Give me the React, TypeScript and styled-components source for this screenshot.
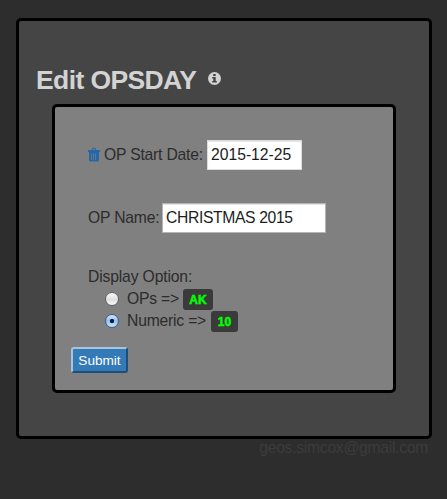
import React from "react";
import styled, { createGlobalStyle } from "styled-components";

const GlobalStyle = createGlobalStyle`
  *, *::before, *::after { box-sizing: border-box; }
  html, body { margin: 0; padding: 0; background: #2d2d2d; }
  body { font-family: "Liberation Sans", Arial, sans-serif; font-size: 15.7px; color: #2c2c2c; overflow: hidden; }
`;

const Page = styled.main`
  width: 447px;
  height: 499px;
  padding: 18px 15px 0 16px;
`;

const Panel = styled.section`
  height: 421px;
  border: 3px solid #000;
  border-radius: 5px;
  background: #454545;
  padding: 41px 33px 0;
`;

const Heading = styled.header`
  display: flex;
  align-items: center;
  height: 34px;
  margin: 0 0 8px -16px;
  color: #d3d3d3;
  svg { margin-left: 12px; margin-top: -1px; }
`;

const Title = styled.h1`
  margin: 2px 0 0;
  width: 160px;
  white-space: nowrap;
  font-size: 26.5px;
  line-height: 34px;
  font-weight: 700;
  letter-spacing: -0.6px;
`;

const Form = styled.form`
  height: 289px;
  border: 3px solid #000;
  border-radius: 5px;
  background: #808080;
  padding: 33px 16px 0;
`;

const Field = styled.div`
  display: flex;
  align-items: center;
  height: 30px;
  margin: 0 0 33px 17px;
`;

const Label = styled.label<{ $width: number }>`
  flex: none;
  width: ${(p) => p.$width}px;
  letter-spacing: -0.2px;
  white-space: nowrap;
`;

const TextInput = styled.input<{ $width: number; $spacing?: number; $edge: string }>`
  width: ${(p) => p.$width}px;
  height: 30px;
  padding: 0 3px 1px;
  border: 1px solid ${(p) => p.$edge};
  border-radius: 0;
  background: #fff;
  box-shadow: inset 0 1px 1px #e4e4e4;
  color: #1c1c1c;
  font: inherit;
  letter-spacing: ${(p) => p.$spacing ?? 0}px;
  outline: none;
`;

const TrashIcon = styled.svg`
  flex: none;
  width: 12px;
  height: 14px;
  margin-right: 4px;
`;

const Options = styled.fieldset`
  margin: 0 0 15px 17px;
  padding: 0;
  border: 0;
`;

const Legend = styled.div`
  height: 22px;
  line-height: 22px;
  letter-spacing: -0.15px;
`;

const Option = styled.div`
  display: flex;
  align-items: center;
  height: 22px;
  padding-left: 17px;
`;

const Radio = styled.input`
  appearance: none;
  flex: none;
  width: 14px;
  height: 14px;
  margin: 0 8px 0 0;
  border: 1px solid #656565;
  border-radius: 50%;
  background: linear-gradient(#fdfdfd, #dedede 55%, #fbfbfb);
  &:checked {
    margin-top: -1px;
    border-color: #405c86;
    background: radial-gradient(circle at 50% 50%, #0b1830 0 1.8px, transparent 2.5px),
      linear-gradient(#d3e6fa, #8fc0f2 50%, #c2eaff);
  }
`;

const Chip = styled.span<{ $width: number }>`
  width: ${(p) => p.$width}px;
  height: 21px;
  border-radius: 3px;
  background: #3a3a3a;
  color: #0f0;
  font-size: 12px;
  line-height: 22px;
  font-weight: 700;
  text-align: center;
  -webkit-text-stroke: 0.5px #0f0;
`;

const Submit = styled.button`
  display: block;
  width: 57px;
  height: 26px;
  padding: 0;
  border: 2px solid;
  border-color: #a5c4df #1d4f7c #1d4f7c #a5c4df;
  border-radius: 3px;
  background: #337ab7;
  color: #fff;
  font: 13.6px/22px "Liberation Sans", Arial, sans-serif;
  padding-top: 1px;
`;

const Footer = styled.footer`
  padding-right: 4px;
  text-align: right;
  line-height: 18px;
  color: #3c3c3c;
  font-size: 15.7px;
  letter-spacing: -0.28px;
`;

export default function App() {
  return (
    <>
      <GlobalStyle />
      <Page>
        <Panel>
          <Heading>
            <Title>Edit OPSDAY</Title>
            <svg width="13" height="13" viewBox="0 0 13 13" aria-label="Information">
              <circle cx="6.5" cy="6.5" r="6.5" fill="#d3d3d3" />
              <path d="M5.2 2h2.5v2H5.2zM4.2 5h3.5v4h1.1v1.6H4.2V9h1.1V6.5H4.2z" fill="#454545" />
            </svg>
          </Heading>
          <Form onSubmit={(e) => e.preventDefault()}>
            <Field>
              <TrashIcon viewBox="0 0 12 14" aria-label="Delete">
                <path d="M4 2V1q0-1 1-1h2q1 0 1 1v1h3q1 0 1 1v1H0V3q0-1 1-1zM5 1v1h2V1z" fill="#2468a8" fillRule="evenodd" />
                <path d="M1 4h10v8q0 1.500-1.500 1.500h-7Q1 13.500 1 12zM3 5.500v6.500h.6V5.500zm2.200 0v6.500h.6V5.500zm2.200 0v6.500H8V5.500z" fill="#2468a8" fillRule="evenodd" />
              </TrashIcon>
              <Label htmlFor="start" $width={103}>OP Start Date:</Label>
              <TextInput id="start" $width={95} $edge="#dcdcdc" defaultValue="2015-12-25" />
            </Field>
            <Field>
              <Label htmlFor="name" $width={74}>OP Name:</Label>
              <TextInput id="name" $width={164} $edge="#b4b4b4" $spacing={-0.35} defaultValue="CHRISTMAS 2015" />
            </Field>
            <Options>
              <Legend>Display Option:</Legend>
              <Option>
                <Radio id="ops" type="radio" name="display" />
                <Label htmlFor="ops" $width={56}>{"OPs =>"}</Label>
                <Chip $width={30}>AK</Chip>
              </Option>
              <Option>
                <Radio id="numeric" type="radio" name="display" defaultChecked />
                <Label htmlFor="numeric" $width={84}>{"Numeric =>"}</Label>
                <Chip $width={27}>10</Chip>
              </Option>
            </Options>
            <Submit type="submit">Submit</Submit>
          </Form>
        </Panel>
        <Footer>geos.simcox@gmail.com</Footer>
      </Page>
    </>
  );
}
